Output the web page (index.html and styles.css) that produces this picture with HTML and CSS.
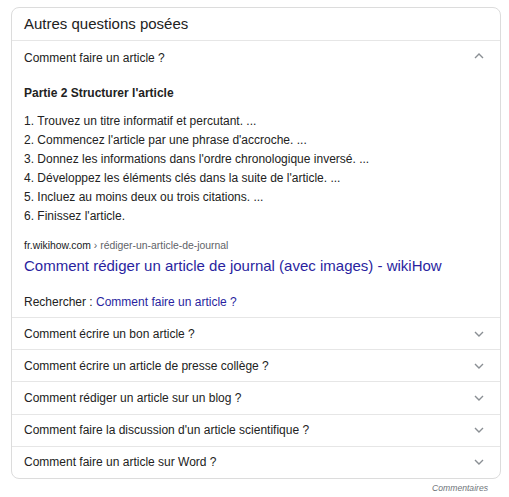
FILE: index.html
```html
<!DOCTYPE html>
<html lang="fr">
<head>
<meta charset="utf-8">
<link rel="stylesheet" href="styles.css">
</head>
<body>
<div class="card">
  <div class="head">Autres questions posées</div>
  <div class="q q-open">
    <span>Comment faire un article ?</span>
    <svg class="chev" width="10" height="6" viewBox="0 0 10 6"><polyline points="1,5 5,1 9,5" fill="none" stroke="#8a8f94" stroke-width="1.4"/></svg>
  </div>
  <div class="answer">
    <div class="title">Partie 2 Structurer l'article</div>
    <ol class="steps">
      <li>Trouvez un titre informatif et percutant. ...</li>
      <li>Commencez l'article par une phrase d'accroche. ...</li>
      <li>Donnez les informations dans l'ordre chronologique inversé. ...</li>
      <li>Développez les éléments clés dans la suite de l'article. ...</li>
      <li>Incluez au moins deux ou trois citations. ...</li>
      <li>Finissez l'article.</li>
    </ol>
    <div class="cite"><span class="dom">fr.wikihow.com</span> › rédiger-un-article-de-journal</div>
    <a class="link" href="#">Comment rédiger un article de journal (avec images) - wikiHow</a>
    <div class="search">Rechercher : <a href="#">Comment faire un article ?</a></div>
  </div>
  <div class="q">
    <span>Comment écrire un bon article ?</span>
    <svg class="chev" width="10" height="6" viewBox="0 0 10 6"><polyline points="1,1 5,5 9,1" fill="none" stroke="#8a8f94" stroke-width="1.4"/></svg>
  </div>
  <div class="q">
    <span>Comment écrire un article de presse collège ?</span>
    <svg class="chev" width="10" height="6" viewBox="0 0 10 6"><polyline points="1,1 5,5 9,1" fill="none" stroke="#8a8f94" stroke-width="1.4"/></svg>
  </div>
  <div class="q">
    <span>Comment rédiger un article sur un blog ?</span>
    <svg class="chev" width="10" height="6" viewBox="0 0 10 6"><polyline points="1,1 5,5 9,1" fill="none" stroke="#8a8f94" stroke-width="1.4"/></svg>
  </div>
  <div class="q">
    <span>Comment faire la discussion d'un article scientifique ?</span>
    <svg class="chev" width="10" height="6" viewBox="0 0 10 6"><polyline points="1,1 5,5 9,1" fill="none" stroke="#8a8f94" stroke-width="1.4"/></svg>
  </div>
  <div class="q">
    <span>Comment faire un article sur Word ?</span>
    <svg class="chev" width="10" height="6" viewBox="0 0 10 6"><polyline points="1,1 5,5 9,1" fill="none" stroke="#8a8f94" stroke-width="1.4"/></svg>
  </div>
</div>
<div class="feedback"><span>Commentaires</span></div>
</body>
</html>
```
FILE: styles.css
```css
html, body {
  margin: 0;
  padding: 0;
  background: #fff;
}
body {
  font-family: "Liberation Sans", Arial, sans-serif;
  color: #222;
  padding: 7px 0 0 11px;
}
.card {
  width: 490px;
  box-sizing: border-box;
  border: 1px solid #dcdcdc;
  border-radius: 8px;
  overflow: hidden;
}
.head {
  font-size: 15px;
  line-height: 20px;
  padding: 6px 12px 6px;
  border-bottom: 1px solid #e6e6e6;
}
.q {
  display: flex;
  align-items: center;
  justify-content: space-between;
  height: 32.2px;
  box-sizing: border-box;
  padding: 0 16px 0 12px;
  font-size: 12px;
  border-top: 1px solid #e6e6e6;
}
.q-open {
  border-top: none;
  height: 32px;
  padding-top: 1px;
}
.chev {
  display: block;
}
.q-open .chev {
  margin-top: -3px;
}
.answer {
  padding: 12px 12px 7px;
}
.title {
  font-size: 12px;
  font-weight: bold;
  line-height: 16px;
}
.steps {
  list-style-position: inside;
  margin: 11px 0 0;
  padding: 0;
  font-size: 12px;
  line-height: 19px;
}
.cite {
  margin-top: 13px;
  font-size: 10.4px;
  line-height: 14px;
  color: #5f6368;
}
.dom {
  color: #202124;
}
.link {
  display: block;
  margin-top: 3px;
  font-size: 15px;
  line-height: 20px;
  color: #2a1fa0;
  text-decoration: none;
}
.search {
  margin-top: 18px;
  font-size: 12px;
  line-height: 16px;
}
.search a {
  color: #2a1fa0;
  text-decoration: none;
}
.feedback {
  width: 477px;
  display: flex;
  justify-content: flex-end;
  margin-top: 3px;
  font-size: 8.6px;
  line-height: 12px;
  font-style: italic;
  color: #70757a;
}
```
